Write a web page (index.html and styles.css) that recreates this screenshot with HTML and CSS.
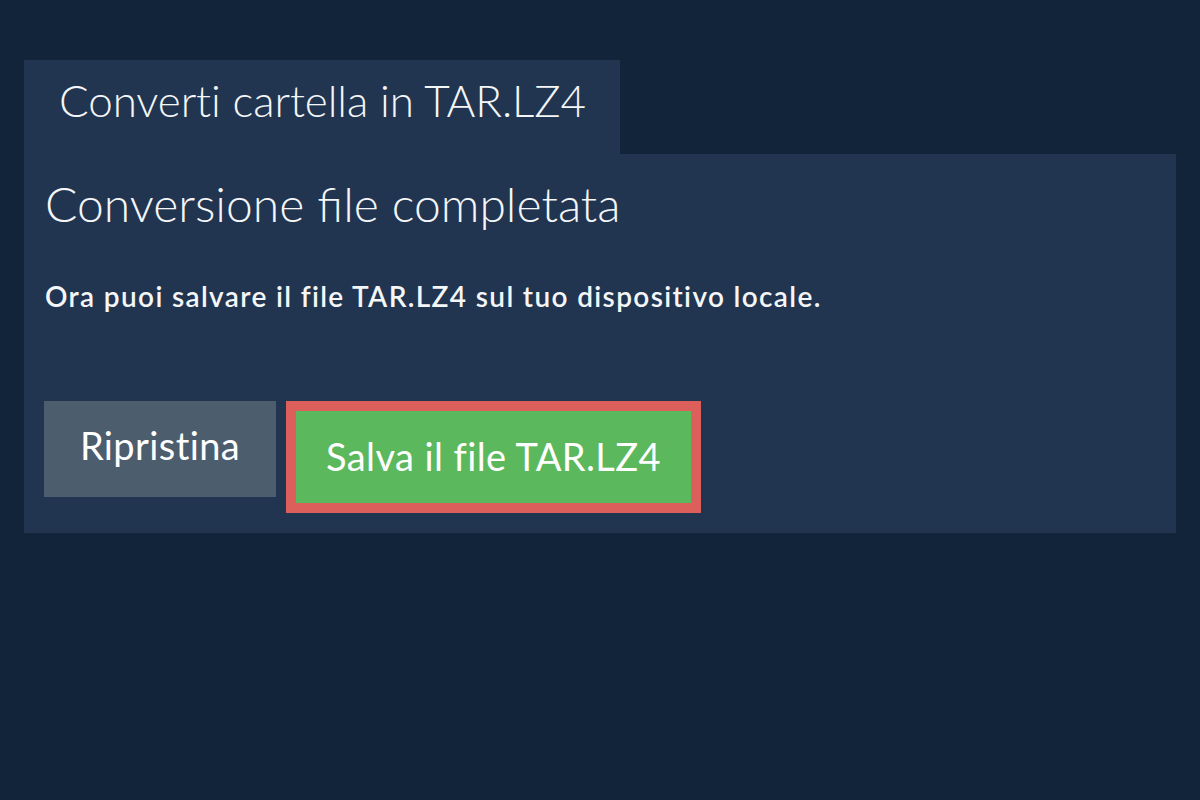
FILE: index.html
```html
<!DOCTYPE html>
<html lang="it">
<head>
<meta charset="utf-8">
<title>Converti cartella in TAR.LZ4</title>
<link rel="stylesheet" href="styles.css">
</head>
<body>
<main class="wrap">
  <div class="tabs">
    <div class="tab">Convert&zwnj;i cartella in TAR.LZ4</div>
  </div>
  <section class="panel">
    <h2 class="title">Conversione file completata</h2>
    <p class="msg">Ora puoi salvare il file TAR.LZ4 sul tuo disposit&zwnj;ivo locale.</p>
    <div class="actions">
      <button class="btn btn-reset" type="button">Riprist&zwnj;ina</button>
      <button class="btn btn-save" type="button">Salva il file TAR.LZ4</button>
    </div>
  </section>
</main>
</body>
</html>
```

FILE: styles.css
```css
html, body {
  margin: 0;
  padding: 0;
}
body {
  background: #11243a;
  font-family: Lato, "Open Sans", sans-serif;
  color: #f4f6f8;
  width: 1200px;
  height: 800px;
  overflow: hidden;
}
.wrap {
  padding: 60px 24px 0 24px;
}
.tabs {
  display: flex;
}
.tab {
  background: #213550;
  width: 596px;
  height: 94px;
  padding: 14px 0 0 35px;
  font-size: 44px;
  font-weight: 300;
  letter-spacing: -0.1px;
  line-height: 1.2;
  white-space: nowrap;
  box-sizing: border-box;
}
.panel {
  background: #213550;
  padding: 21px 21px 20px 21px;
}
.title {
  margin: 0;
  font-size: 48px;
  font-weight: 300;
  line-height: 1.2;
}
.msg {
  margin: 47px 0 0 0;
  font-size: 28px;
  font-weight: 600;
  letter-spacing: 1.35px;
  line-height: 1.2;
}
.actions {
  display: flex;
  align-items: flex-start;
  gap: 10px;
  margin-top: 88px;
  margin-left: -1px;
}
.btn {
  font-family: inherit;
  font-size: 38px;
  font-weight: 400;
  letter-spacing: 0.4px;
  line-height: 1.2;
  color: #ffffff;
  border: 0;
  margin: 0;
  cursor: pointer;
  box-sizing: border-box;
}
.btn-reset {
  background: #4c5d6e;
  width: 232px;
  height: 96px;
  padding: 0 0 6px 0;
}
.btn-save {
  background: #5cb85c;
  border: 10px solid #dc5f5b;
  width: 415px;
  height: 112px;
  padding: 0;
}
```
